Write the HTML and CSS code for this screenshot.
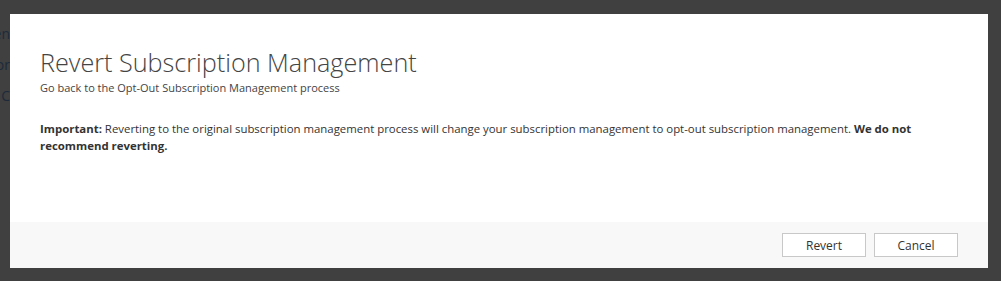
FILE: index.html
```html
<!DOCTYPE html>
<html lang="en">
<head>
<meta charset="utf-8">
<title>Revert Subscription Management</title>
<link rel="stylesheet" href="styles.css">
</head>
<body>
<div class="page">
  <ul class="behind">
    <li>Segmen</li>
    <li>Stor</li>
    <li>Go C</li>
  </ul>
</div>
<div class="dialog" role="dialog" aria-labelledby="dlg-title">
  <div class="dialog-body">
    <h1 class="title" id="dlg-title">Revert Subscription Management</h1>
    <p class="subtitle">Go back to the Opt-Out Subscription Management process</p>
    <p class="message"><strong>Important:</strong> Reverting to the original subscription management process will change your subscription management to opt-out subscription management. <strong>We do not recommend reverting.</strong></p>
  </div>
  <div class="dialog-footer">
    <button class="btn" type="button">Revert</button>
    <button class="btn" type="button">Cancel</button>
  </div>
</div>
</body>
</html>
```

FILE: styles.css
```css
html, body {
  margin: 0;
  padding: 0;
  height: 100%;
}
body {
  background: #404040;
  font-family: "Open Sans", "Noto Sans", sans-serif;
  overflow: hidden;
}
.page {
  height: 100%;
}
.behind {
  list-style: none;
  margin: 0;
  padding: 24px 0 0 0;
  width: 60px;
  margin-left: -50px;
  text-align: right;
  font-size: 14px;
  color: #1e2a3a;
}
.behind li {
  height: 31px;
  line-height: 20px;
}
.dialog {
  position: absolute;
  left: 10px;
  top: 14px;
  width: 978px;
  height: 254px;
  background: #ffffff;
  display: flex;
  flex-direction: column;
}
.dialog-body {
  flex: 1;
  padding: 0 30px;
  color: #333333;
}
.title {
  margin: 32px 0 0 0;
  font-size: 25.2px;
  font-weight: 300;
  line-height: 32px;
  color: #444444;
}
.subtitle {
  margin: 2px 0 0 0;
  font-size: 11px;
  line-height: 16px;
  color: #444444;
}
.message {
  margin: 24px 0 0 0;
  font-size: 11.4px;
  line-height: 17px;
  color: #333333;
}
.message strong {
  font-weight: 700;
}
.dialog-footer {
  height: 46px;
  background: #f8f8f8;
  display: flex;
  justify-content: flex-end;
  align-items: center;
  gap: 8px;
  padding: 0 30px;
}
.btn {
  width: 84px;
  height: 24px;
  background: #ffffff;
  border: 1px solid #c8c8c8;
  font-family: inherit;
  font-size: 12px;
  color: #333333;
  padding: 0;
  cursor: pointer;
}
```
